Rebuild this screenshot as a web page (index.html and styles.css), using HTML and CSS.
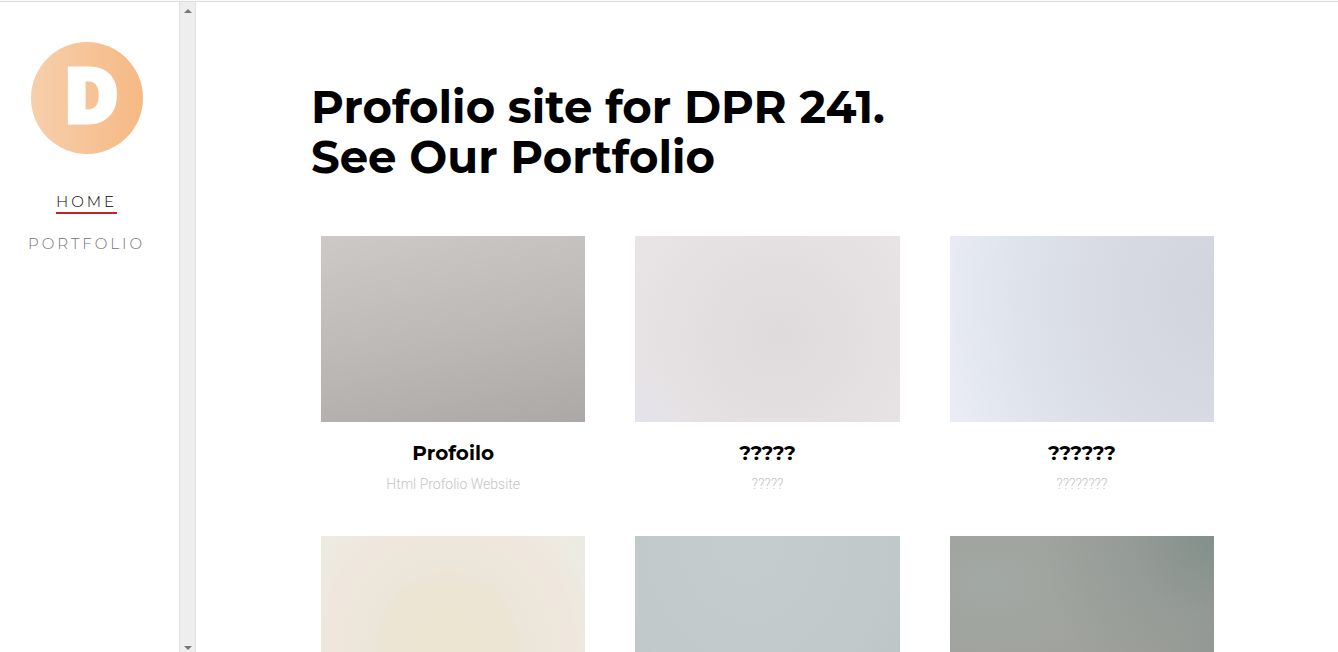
FILE: index.html
```html
<!DOCTYPE html>
<html lang="en">
<head>
<meta charset="utf-8">
<meta name="viewport" content="width=device-width, initial-scale=1">
<title>Portfolio</title>
<link rel="stylesheet" href="styles.css">
</head>
<body>
<div class="page">
  <header class="sidebar">
    <div class="sidebar-content">
      <a class="logo" href="#" aria-label="Home page">D</a>
      <nav class="menu">
        <a class="menu-link active" href="#">HOME</a>
        <a class="menu-link" href="#portfolio">PORTFOLIO</a>
      </nav>
    </div>
    <div class="scroll-track" aria-hidden="true">
      <svg class="arrow" viewBox="0 0 8 4"><path d="M4 0L8 4H0Z"/></svg>
      <svg class="arrow" viewBox="0 0 8 4"><path d="M0 0H8L4 4Z"/></svg>
    </div>
  </header>
  <main class="main">
    <h1 class="title">Profolio site for DPR 241.<br>See Our Portfolio</h1>
    <section class="grid" id="portfolio">
      <article class="card">
        <div class="thumb stone"></div>
        <h2 class="card-title">Profoilo</h2>
        <p class="card-text">Html Profolio Website</p>
      </article>
      <article class="card">
        <div class="thumb blush"></div>
        <h2 class="card-title">?????</h2>
        <p class="card-text">?????</p>
      </article>
      <article class="card">
        <div class="thumb sky"></div>
        <h2 class="card-title">??????</h2>
        <p class="card-text">????????</p>
      </article>
      <article class="card"><div class="thumb cream"></div></article>
      <article class="card"><div class="thumb mist"></div></article>
      <article class="card"><div class="thumb slate"></div></article>
    </section>
  </main>
</div>
</body>
</html>
```
FILE: styles.css
```css
* { box-sizing: border-box; }
body { margin: 0; background: #fff; color: #000; font-family: Montserrat, Inter, sans-serif; }
.page { display: flex; height: 100vh; padding-top: 1px; border-top: 1px solid #fafafa; background: linear-gradient(#dcdcdc, #dcdcdc) 0 0 / 100% 1px no-repeat; }
.sidebar { display: flex; flex: 0 0 196px; }
.sidebar-content { flex: 1; display: flex; flex-direction: column; align-items: center; padding: 40px 6px 0 0; }
.logo {
  display: flex; align-items: center; justify-content: center;
  width: 112px; height: 112px; padding: 0 0 8px 10px; border-radius: 50%;
  background: linear-gradient(90deg, #f6cfac, #f6b983);
  color: #fff; font: 800 76px/1 "Open Sans", sans-serif; text-decoration: none;
  -webkit-text-stroke: 3px #fff;
}
.menu { display: flex; flex-direction: column; align-items: center; gap: 20px; margin-top: 38px; }
.menu-link { color: #707078; font-size: 15px; font-weight: 300; line-height: 20px; letter-spacing: 3px; text-decoration: none; border-bottom: 2px solid transparent; }
.menu-link.active { color: #000; border-color: #c1202c; }
.scroll-track {
  display: flex; flex-direction: column; align-items: center; justify-content: space-between;
  width: 17px; padding: 7px 0 2px; background: #eee; border: solid #e0e0e0; border-width: 0 1px;
}
.arrow { width: 8px; height: 4px; fill: #777; }
.main { flex: 1; min-width: 0; padding: 80px 99px 0 100px; overflow-y: auto; scrollbar-width: none; }
.title { margin: 0 0 54px; padding-left: 15px; font-size: 45px; font-weight: 700; line-height: 50px; }
.grid { display: grid; grid-template-columns: repeat(3, 1fr); column-gap: 50px; row-gap: 40px; padding: 0 25px; }
.card { text-align: center; }
.thumb { aspect-ratio: 264 / 186; }
.card-title { margin: 18px 0 0; font-size: 20px; font-weight: 700; line-height: 26px; }
.card-text { margin: 8px 0 2px; color: #c4c4c4; font: 300 14px/20px Roboto, sans-serif; }
.stone { background: linear-gradient(168deg, #cdc9c6, #bdb9b6 52%, #aba8a5); }
.blush { background: radial-gradient(circle at 0 100%, #e4e2eb, transparent 20%), radial-gradient(circle at 54% 54%, #dfdbdc, #e2dedf 35%, #e9e5e6); }
.sky { background: radial-gradient(ellipse 105% 180% at 100% 32%, #d1d4dd, #d8dbe3 42%, #dfe3eb 72%, #e9ecf5); }
.cream { background: radial-gradient(circle at 48% 58%, #ebe5d1, #ece5d3 32%, #ece5d9 44%, #efe7dd 72%, #ecebe2 90%); }
.mist { background: radial-gradient(ellipse at 43% 0, #c4cccd, #c1c9ca 60%, #bbc4c5); }
.slate { background: radial-gradient(circle at 100% 0, #82908b, #8e979499 25%, transparent 55%), radial-gradient(ellipse at 15% 25%, #a2a8a4, #9f9f99 65%, #8b908f); }
```
